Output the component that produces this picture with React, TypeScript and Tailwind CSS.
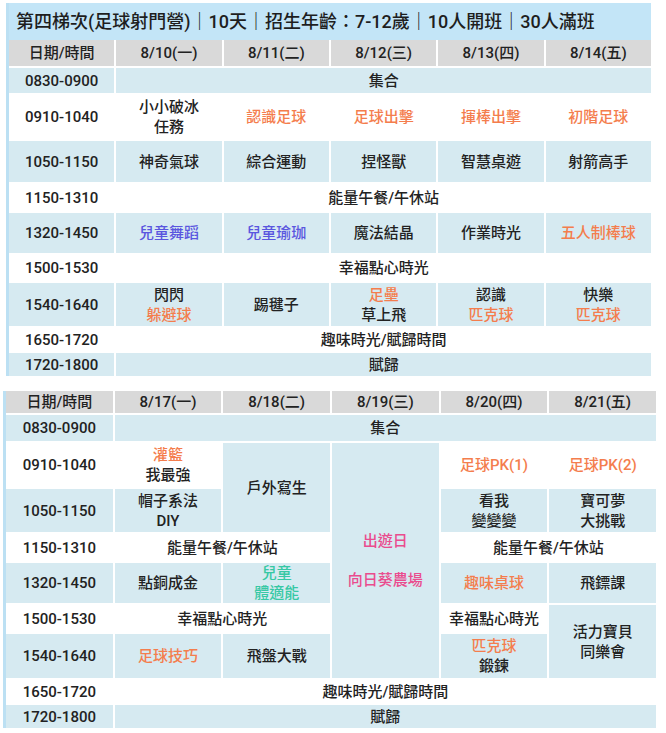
import React from "react";

type Cell = {
  lines: { t: string; c?: string }[];
  bg: "w" | "b" | "g";
  col?: string;
  row?: string;
  gap?: boolean;
};

const OR = "text-[#f47d4d]";
const PU = "text-[#5a56df]";
const TE = "text-[#36c8a4]";
const PK = "text-[#ea4c8e]";

const bgOf = (b: Cell["bg"]) =>
  b === "w" ? "bg-white" : b === "b" ? "bg-[#d6eaf1]" : "bg-[#d9d9d9]";

const c = (bg: Cell["bg"], ...lines: (string | [string, string])[]): Cell => ({
  bg,
  lines: lines.map((l) => (typeof l === "string" ? { t: l } : { t: l[0], c: l[1] })),
});

const span = (cell: Cell, col?: string, row?: string): Cell => ({ ...cell, col, row });

const week1: Cell[] = [
  c("g", "日期/時間"), c("g", "8/10(一)"), c("g", "8/11(二)"), c("g", "8/12(三)"), c("g", "8/13(四)"), c("g", "8/14(五)"),
  c("b", "0830-0900"), span(c("b", "集合"), "col-span-5"),
  c("w", "0910-1040"), c("w", "小小破冰", "任務"), c("w", ["認識足球", OR]), c("w", ["足球出擊", OR]), c("w", ["揮棒出擊", OR]), c("w", ["初階足球", OR]),
  c("b", "1050-1150"), c("b", "神奇氣球"), c("b", "綜合運動"), c("b", "捏怪獸"), c("b", "智慧桌遊"), c("b", "射箭高手"),
  c("w", "1150-1310"), span(c("w", "能量午餐/午休站"), "col-span-5"),
  c("b", "1320-1450"), c("b", ["兒童舞蹈", PU]), c("b", ["兒童瑜珈", PU]), c("b", "魔法結晶"), c("b", "作業時光"), c("b", ["五人制棒球", OR]),
  c("w", "1500-1530"), span(c("w", "幸福點心時光"), "col-span-5"),
  c("b", "1540-1640"), c("b", "閃閃", ["躲避球", OR]), c("b", "踢毽子"), c("b", ["足壘", OR], "草上飛"), c("b", "認識", ["匹克球", OR]), c("b", "快樂", ["匹克球", OR]),
  c("w", "1650-1720"), span(c("w", "趣味時光/賦歸時間"), "col-span-5"),
  c("b", "1720-1800"), span(c("b", "賦歸"), "col-span-5"),
];

const outing: Cell = {
  ...c("b", ["出遊日", PK], ["向日葵農場", PK]),
  col: "col-start-4",
  row: "row-start-3 row-span-6",
  gap: true,
};

const week2: Cell[] = [
  c("g", "日期/時間"), c("g", "8/17(一)"), c("g", "8/18(二)"), c("g", "8/19(三)"), c("g", "8/20(四)"), c("g", "8/21(五)"),
  c("b", "0830-0900"), span(c("b", "集合"), "col-span-5"),
  c("w", "0910-1040"), c("w", ["灌籃", OR], "我最強"), span(c("b", "戶外寫生"), "", "row-span-2"), outing, c("w", ["足球PK(1)", OR]), c("w", ["足球PK(2)", OR]),
  c("b", "1050-1150"), c("b", "帽子系法", "DIY"), c("b", "看我", "變變變"), c("b", "寶可夢", "大挑戰"),
  c("w", "1150-1310"), span(c("w", "能量午餐/午休站"), "col-span-2"), span(c("w", "能量午餐/午休站"), "col-start-5 col-span-2"),
  c("b", "1320-1450"), c("b", "點銅成金"), c("b", ["兒童", TE], ["體適能", TE]), span(c("b", ["趣味桌球", OR]), "col-start-5"), c("b", "飛鏢課"),
  c("w", "1500-1530"), span(c("w", "幸福點心時光"), "col-span-2"), span(c("w", "幸福點心時光"), "col-start-5"), span(c("b", "活力寶貝", "同樂會"), "", "row-span-2"),
  c("b", "1540-1640"), c("b", ["足球技巧", OR]), c("b", "飛盤大戰"), span(c("b", ["匹克球", OR], "鍛鍊"), "col-start-5"),
  c("w", "1650-1720"), span(c("w", "趣味時光/賦歸時間"), "col-span-5"),
  c("b", "1720-1800"), span(c("b", "賦歸"), "col-span-5"),
];

const Grid = ({ cells, rows }: { cells: Cell[]; rows: string }) => (
  <div className={`grid grid-cols-6 gap-[2px] bg-white ${rows}`}>
    {cells.map((cell, i) => (
      <div
        key={i}
        className={`flex flex-col items-center justify-center text-center leading-[20px] ${bgOf(cell.bg)} ${cell.col ?? ""} ${cell.row ?? ""} ${cell.gap ? "gap-[19px]" : ""}`}
      >
        {cell.lines.map((l, j) => (
          <span key={j} className={l.c ?? "text-[#222]"}>
            {l.t}
          </span>
        ))}
      </div>
    ))}
  </div>
);

export default function App() {
  return (
    <div
      className="w-[666px] h-[733px] bg-white text-[15px] font-medium overflow-hidden"
      style={{ fontFamily: 'Roboto, "Noto Sans CJK TC", sans-serif' }}
    >
      <div className="ml-[6px] mt-[3px] w-[645px] border-l-[3px] border-[#bce0f3]">
        <div className="h-[37px] bg-[#c3e5f7] flex items-center pl-[7px] text-[18px] text-[#1e1e1e]">
          第四梯次(足球射門營)｜10天｜招生年齡：7-12歲｜10人開班｜30人滿班
        </div>
        <Grid
          cells={week1}
          rows="grid-rows-[26px_25px_44px_41px_27px_40px_26px_43px_23px_23px]"
        />
      </div>
      <div className="ml-[3px] mt-[15px] w-[653px] border-l-[3px] border-[#bce0f3]">
        <Grid
          cells={week2}
          rows="grid-rows-[22px_26px_44px_43px_27px_40px_27px_44px_23px_23px]"
        />
      </div>
    </div>
  );
}
